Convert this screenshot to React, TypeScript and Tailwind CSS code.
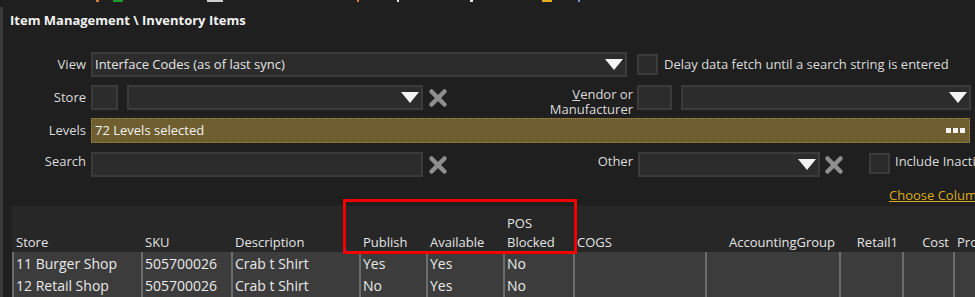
import { ReactNode } from "react";

function Tri() {
  return (
    <svg width="18" height="11" viewBox="0 0 18 11" className="shrink-0">
      <path d="M0 0H18L9 11Z" fill="#f4f4f4" />
    </svg>
  );
}

function XIcon() {
  return (
    <svg width="20" height="20" viewBox="0 0 20 20" className="shrink-0">
      <path
        d="M3.5 3.5L16.5 16.5M16.5 3.5L3.5 16.5"
        stroke="#8e8e8e"
        strokeWidth="4.5"
        strokeLinecap="round"
      />
    </svg>
  );
}

function Box({ w, children }: { w: string; children?: ReactNode }) {
  return (
    <div
      className={`${w} flex h-[25px] shrink-0 items-center justify-between border-2 border-[#3b3b3b] bg-[#2c2c2c] pl-[2px] pr-[2px] text-[#e6e6e6]`}
    >
      {children}
    </div>
  );
}

function Check() {
  return (
    <div className="h-[21px] w-[21px] shrink-0 border-2 border-[#3b3b3b] bg-[#2a2a2a]" />
  );
}

function Label({ w, children, up }: { w: string; children: ReactNode; up?: boolean }) {
  return (
    <div className={`${w} shrink-0 text-right text-[#dcdcdc] ${up ? "pb-[6px]" : ""}`}>
      {children}
    </div>
  );
}

const columns = [
  { name: "Store", w: "w-[129px]" },
  { name: "SKU", w: "w-[90px]" },
  { name: "Description", w: "w-[128px]" },
  { name: "Publish", w: "w-[67px]" },
  { name: "Available", w: "w-[77px]" },
  { name: "POS Blocked", w: "w-[70px]" },
  { name: "COGS", w: "w-[132px]" },
  { name: "AccountingGroup", w: "w-[134px]", right: true },
  { name: "Retail1", w: "w-[63px]", right: true },
  { name: "Cost", w: "w-[51px]", right: true },
  { name: "Pro", w: "w-[40px]" },
];

const rows = [
  ["11 Burger Shop", "505700026", "Crab t Shirt", "Yes", "Yes", "No", "", "", "", "", ""],
  ["12 Retail Shop", "505700026", "Crab t Shirt", "No", "Yes", "No", "", "", "", "", ""],
];

function App() {
  return (
    <div className="relative h-[297px] w-[975px] overflow-hidden bg-[#1f1f1f] font-['Open_Sans',sans-serif] text-[13px]">
      {/* cut-off toolbar icons */}
      <div className="relative h-[7px]">
        <div className="absolute left-[96px] top-0 h-[2px] w-[3px] bg-[#d08030]" />
        <div className="absolute left-[113px] top-0 h-[2px] w-[10px] bg-[#1f9a2a]" />
        <div className="absolute left-[207px] top-0 h-[2px] w-[16px] bg-[#cfcfcf]" />
        <div className="absolute left-[357px] top-0 h-[2px] w-[2px] bg-[#d08030]" />
        <div className="absolute left-[397px] top-0 h-[2px] w-[2px] bg-[#e8e8e8]" />
        <div className="absolute left-[470px] top-0 h-[2px] w-[3px] bg-[#e8e8e8]" />
        <div className="absolute left-[542px] top-0 h-[2px] w-[10px] bg-[#e0b020]" />
        <div className="absolute left-[578px] top-0 h-[2px] w-[2px] bg-[#8090d0]" />
      </div>

      <div className="h-[290px] border-l-[3px] border-[#3a3a3a]">
        <div className="flex h-[27px] items-center pl-[7px] font-bold text-[#f2f2f2]">
          Item Management \ Inventory Items
        </div>

        {/* View */}
        <div className="mt-[18px] flex h-[25px] items-center">
          <Label w="w-[83px]">View</Label>
          <div className="ml-[5px]">
            <Box w="w-[536px]">
              <span>Interface Codes (as of last sync)</span>
              <Tri />
            </Box>
          </div>
          <div className="ml-[10px]">
            <Check />
          </div>
          <span className="ml-[6px] whitespace-nowrap text-[#dcdcdc]">
            Delay data fetch until a search string is entered
          </span>
        </div>

        {/* Store */}
        <div className="mt-[8px] flex h-[25px] items-center">
          <Label w="w-[83px]">Store</Label>
          <div className="ml-[5px] flex items-center">
            <Box w="w-[27px]" />
            <div className="ml-[9px]">
              <Box w="w-[296px]">
                <span />
                <Tri />
              </Box>
            </div>
            <div className="ml-[5px]">
              <XIcon />
            </div>
          </div>
          <div className="w-[185px] shrink-0 self-start pt-[2px] text-right leading-[15px] text-[#dcdcdc]">
            <span className="underline">V</span>endor or
            <br />
            Manufacturer
          </div>
          <div className="ml-[4px]">
            <Box w="w-[35px]" />
          </div>
          <div className="ml-[9px]">
            <Box w="w-[290px]">
              <span />
              <Tri />
            </Box>
          </div>
        </div>

        {/* Levels */}
        <div className="mt-[8px] flex h-[25px] items-center">
          <Label w="w-[83px]">Levels</Label>
          <div className="ml-[5px] flex h-[25px] w-[879px] items-center justify-between border border-dotted border-[#a48c4c] bg-[#6f5e2f] pl-[3px] pr-[4px] text-[#f2f2f2]">
            <span>72 Levels selected</span>
            <span className="flex gap-[2px]">
              <span className="h-[5px] w-[5px] bg-[#f4f4f4]" />
              <span className="h-[5px] w-[5px] bg-[#f4f4f4]" />
              <span className="h-[5px] w-[5px] bg-[#f4f4f4]" />
            </span>
          </div>
        </div>

        {/* Search */}
        <div className="mt-[9px] flex h-[25px] items-center">
          <Label w="w-[83px]" up>
            Search
          </Label>
          <div className="ml-[5px]">
            <Box w="w-[332px]" />
          </div>
          <div className="ml-[5px]">
            <XIcon />
          </div>
          <Label w="w-[185px]" up>
            Other
          </Label>
          <div className="ml-[5px]">
            <Box w="w-[182px]">
              <span />
              <Tri />
            </Box>
          </div>
          <div className="ml-[4px]">
            <XIcon />
          </div>
          <div className="ml-[25px] pb-[2px]">
            <Check />
          </div>
          <span className="ml-[5px] whitespace-nowrap pb-[5px] text-[#dcdcdc]">
            Include Inactive
          </span>
        </div>

        {/* Choose Columns */}
        <div className="flex h-[29px] items-center pl-[886px] pt-[9px]">
          <span className="whitespace-nowrap text-[#dcab1e] underline decoration-[#dcab1e]">
            Choose Columns
          </span>
        </div>

        {/* Grid */}
        <div className="ml-[9px] w-[1000px]">
          <div className="flex h-[46px] bg-[#272727] text-[#e4e4e4]">
            {columns.map((c) => (
              <div
                key={c.name}
                className={`${c.w} flex shrink-0 items-end leading-[19px] ${
                  c.right ? "justify-end pr-[4px]" : "pl-[4px]"
                }`}
              >
                {c.name === "POS Blocked" ? (
                  <span>
                    POS
                    <br />
                    Blocked
                  </span>
                ) : (
                  <span>{c.name}</span>
                )}
              </div>
            ))}
          </div>
          {rows.map((r, i) => (
            <div key={i} className="flex h-[22.5px] bg-[#3c3c3c] text-[14px] text-[#eaeaea]">
              {columns.map((c, j) => (
                <div
                  key={j}
                  className={`${c.w} flex shrink-0 items-center border-l-2 border-[#6c6c6c] pl-[2px] whitespace-nowrap`}
                >
                  {r[j]}
                </div>
              ))}
            </div>
          ))}
        </div>
      </div>

      {/* annotation box */}
      <div className="absolute left-[343px] top-[199px] h-[55px] w-[234px] border-[3px] border-[#f00000]" />
    </div>
  );
}

export default App;
